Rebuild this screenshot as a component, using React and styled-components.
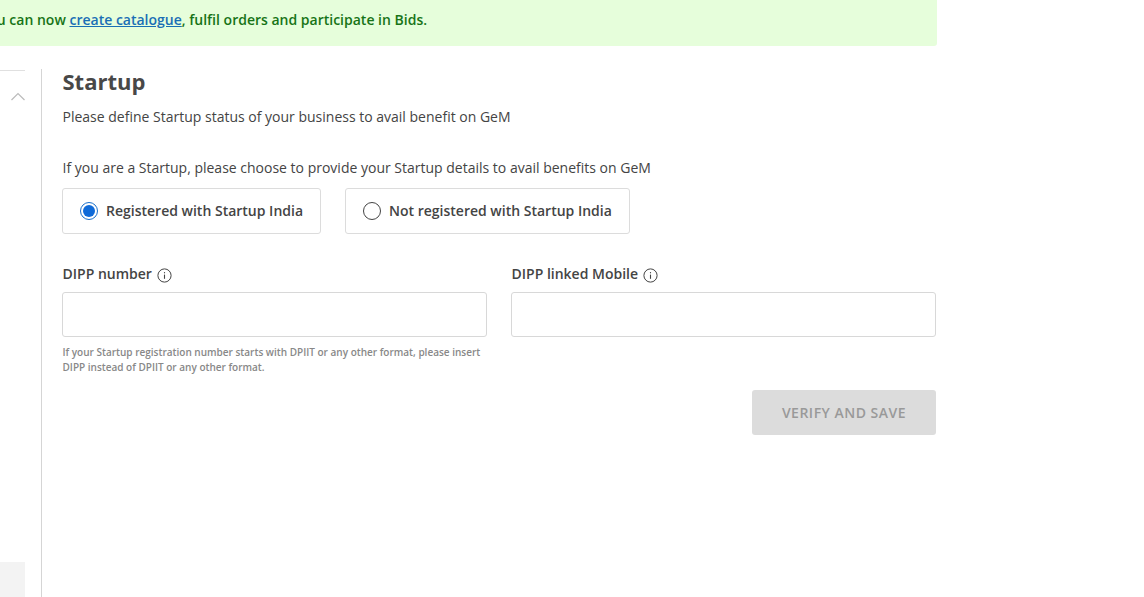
import React from "react";
import styled, { createGlobalStyle } from "styled-components";

const Global = createGlobalStyle`
  html, body { margin: 0; padding: 0; background: #fff; overflow: hidden; }
  body { font-family: "Open Sans", "Liberation Sans", sans-serif; color: #444; }
`;
const Page = styled.div`
  width: 1144px; height: 597px; overflow: hidden; display: flex; flex-direction: column;
`;
const Banner = styled.div`
  width: 937px; height: 46px; box-sizing: border-box; background: #e6fedb; border-radius: 0 0 3px 0;
  display: flex; align-items: center; padding-bottom: 7px; overflow: hidden;
`;
const BannerText = styled.div`
  margin-left: -20px; font-size: 14px; font-weight: 600; color: #177417; white-space: nowrap;
  a { color: #1a6fb5; font-weight: 600; text-decoration: underline; }
`;
const Main = styled.div`
  flex: 1; display: flex; margin-top: 23px; min-height: 0;
`;
const Sidebar = styled.div`
  width: 25px; flex: none; display: flex; flex-direction: column; justify-content: space-between;
  border-top: 1px solid #e0e0e0; margin-top: 1px;
`;
const Chevron = styled.svg`
  display: block; width: 16px; height: 9px; margin: 21px 0 0 10px; fill: none; stroke: #bbb; stroke-width: 1.2;
`;
const SideFoot = styled.div`
  height: 35px; background: #f3f3f3;
`;
const Content = styled.div`
  margin-left: 16px; width: 895px; box-sizing: border-box; border-left: 1px solid #d5d5d5; padding-left: 20px;
`;
const Title = styled.h2`
  margin: -1px 0 0; font-size: 22px; line-height: 27px; font-weight: 700; color: #484848; padding-left: 0.5px;
`;
const Sub = styled.p`
  margin: 12px 0 0; font-size: 14px; line-height: 20px; color: #444; padding-left: 0.5px;
`;
const Prompt = styled(Sub)`
  margin-top: 31px;
`;
const Options = styled.div`
  display: flex; gap: 24px; margin-top: 10px;
`;
const Option = styled.label`
  height: 46px; box-sizing: border-box; padding: 0 17px; display: flex; align-items: center; gap: 8px;
  border: 1px solid #dcdcdc; border-radius: 3px; font-size: 14px; font-weight: 600; color: #444;
`;
const OptionText = styled.span`
  padding-bottom: 2px;
`;
const Radio = styled.span`
  width: 18px; height: 18px; box-sizing: border-box; border-radius: 50%; flex: none; background: #fff;
  border: 1px solid ${p => (p.$on ? "#1a6fc9" : "#444")};
  display: flex; align-items: center; justify-content: center;
  &::after { content: ""; width: 12px; height: 12px; border-radius: 50%; background: ${p => (p.$on ? "#0f6ad8" : "transparent")}; }
`;
const Fields = styled.div`
  display: grid; grid-template-columns: 425px 425px; column-gap: 24px; margin-top: 30px;
`;
const Field = styled.div`
  display: flex; flex-direction: column;
`;
const FieldLabel = styled.div`
  display: flex; align-items: center; gap: 5px; font-size: 14px; font-weight: 600; line-height: 20px; color: #444; padding-left: 0.5px;
`;
const Input = styled.input`
  height: 45px; box-sizing: border-box; margin-top: 8px; width: 100%; border: 1px solid #d8d8d8; border-radius: 3px; background: #fff;
`;
const Hint = styled.p`
  margin: 8px 0 0; font-size: 10px; line-height: 15px; font-weight: 600; color: #888; width: 425px; padding-left: 0.5px; box-sizing: border-box;
`;
const Actions = styled.div`
  display: flex; justify-content: flex-end; width: 874px; margin-top: 15px;
`;
const Verify = styled.button`
  width: 184px; height: 45px; border: 0; border-radius: 3px; background: #dcdcdc; color: #999;
  font: 600 14px "Open Sans", sans-serif; letter-spacing: 0.5px;
`;
const Info = () => (
  <svg width="15" height="15" viewBox="0 0 15 15" fill="none" stroke="#444" style={{ marginTop: 2 }}>
    <circle cx="7.5" cy="7.5" r="6.6" strokeWidth="1" />
    <path d="M7.5 6.6v4.2" strokeWidth="1.1" />
    <path d="M7.5 4.1v1.2" strokeWidth="1.1" />
  </svg>
);

export default function App() {
  return (
    <Page>
      <Global />
      <Banner>
        <BannerText>You can now <a href="#c">create catalogue</a>, fulfil orders and participate in Bids.</BannerText>
      </Banner>
      <Main>
        <Sidebar>
          <Chevron viewBox="0 0 16 9"><path d="M1.5 8L8 1.5 14.5 8" /></Chevron>
          <SideFoot />
        </Sidebar>
        <Content>
          <Title>Startup</Title>
          <Sub>Please define Startup status of your business to avail benefit on GeM</Sub>
          <Prompt>If you are a Startup, please choose to provide your Startup details to avail benefits on GeM</Prompt>
          <Options>
            <Option><Radio $on /><OptionText>Registered with Startup India</OptionText></Option>
            <Option><Radio /><OptionText>Not registered with Startup India</OptionText></Option>
          </Options>
          <Fields>
            <Field>
              <FieldLabel>DIPP number <Info /></FieldLabel>
              <Input />
              <Hint>If your Startup registration number starts with DPIIT or any other format, please insert DIPP instead of DPIIT or any other format.</Hint>
            </Field>
            <Field>
              <FieldLabel>DIPP linked Mobile <Info /></FieldLabel>
              <Input />
            </Field>
          </Fields>
          <Actions><Verify>VERIFY AND SAVE</Verify></Actions>
        </Content>
      </Main>
    </Page>
  );
}
